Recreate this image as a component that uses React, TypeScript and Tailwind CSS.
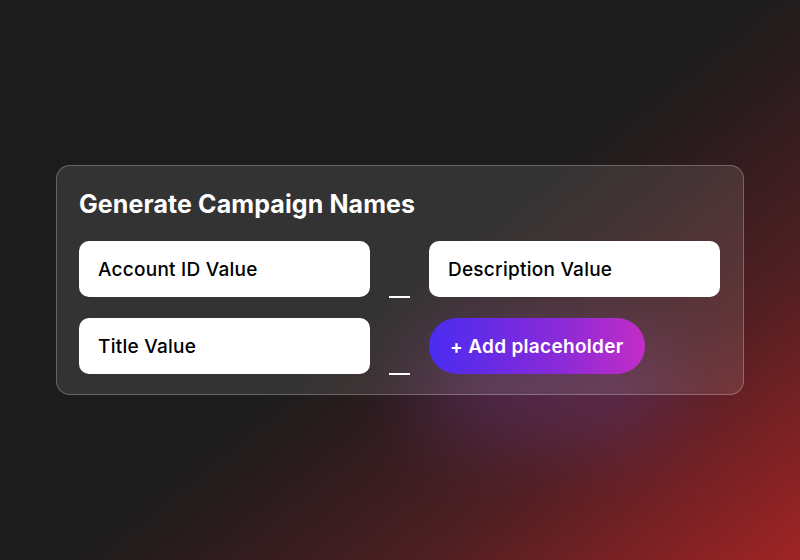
import React from "react";

const Field: React.FC<{ label: string }> = ({ label }) => (
  <div className="h-[56px] w-[291px] shrink-0 rounded-[10px] bg-white flex items-center px-[19px] pt-[3px] text-[19px] tracking-[0.25px] font-medium text-black">
    {label}
  </div>
);

const Dash = () => (
  <div className="w-[21px] h-[56px] shrink-0 flex items-end">
    <div className="w-full h-[2px] bg-white mb-[-1px]" />
  </div>
);

export default function App() {
  return (
    <div
      className="relative w-[800px] h-[560px] overflow-hidden flex items-center justify-center bg-[#1c1c1c] bg-[linear-gradient(141deg,#1c1c1c_0%,#1c1c1c_50%,#2e1c1e_60%,#4e1f22_75%,#7a2124_88%,#a02424_100%)]"
      style={{ fontFamily: "Inter, 'Noto Sans', sans-serif" }}
    >
      {/* glow under the button */}
      <div className="absolute left-[420px] top-[330px] w-[260px] h-[110px] rounded-full bg-[#7a3fa0] opacity-35 blur-[40px]" />

      <div className="relative w-[688px] rounded-[14px] border border-white/25 bg-white/10 px-[22px] pt-[22px] pb-[20px]">
        <h1 className="text-[25px] leading-[32px] font-bold text-white tracking-[0.1px]">
          Generate Campaign Names
        </h1>

        <div className="mt-[21px] flex flex-col gap-[21px]">
          <div className="flex items-center gap-[19px]">
            <Field label="Account ID Value" />
            <Dash />
            <Field label="Description Value" />
          </div>
          <div className="flex items-center gap-[19px]">
            <Field label="Title Value" />
            <Dash />
            <button className="h-[56px] shrink-0 whitespace-nowrap rounded-full bg-[linear-gradient(90deg,#4a2cf0_0%,#8a2ad8_60%,#c22dc6_100%)] text-white text-[19px] tracking-[0.3px] font-semibold flex items-center pl-[21px] pr-[21px] pt-[2px]">
              + Add placeholder
            </button>
          </div>
        </div>
      </div>
    </div>
  );
}
